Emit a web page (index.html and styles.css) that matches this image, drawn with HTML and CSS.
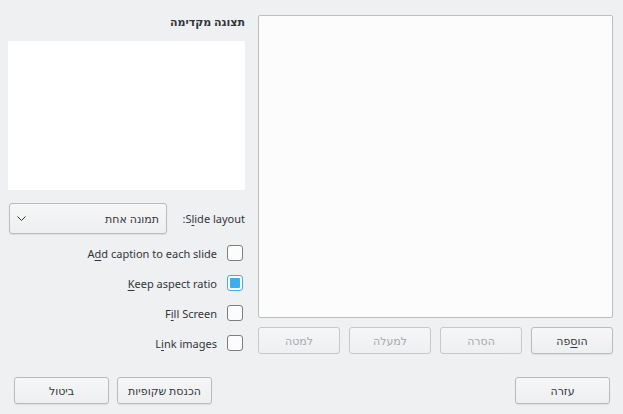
FILE: index.html
```html
<!DOCTYPE html>
<html dir="rtl" lang="he">
<head>
<meta charset="utf-8">
<link rel="stylesheet" href="styles.css">
</head>
<body>
<div class="dialog">
  <div class="main">
    <div class="list-col">
      <div class="list"></div>
      <div class="list-buttons">
        <button class="btn">הו<u>ס</u>פה</button>
        <button class="btn disabled">הסרה</button>
        <button class="btn disabled">למעלה</button>
        <button class="btn disabled">למטה</button>
      </div>
    </div>
    <div class="side-col">
      <div class="title">תצוגה מקדימה</div>
      <div class="preview"></div>
      <div class="layout-row">
        <span class="label"><span dir="ltr">S<u>l</u>ide layout</span>:</span>
        <div class="combo">
          <span class="combo-text">תמונה אחת</span>
          <svg class="combo-arrow" width="9" height="5" viewBox="0 0 9 5"><path d="M0.5 0.5 L4.5 4.5 L8.5 0.5" fill="none" stroke="#31363b" stroke-width="1"/></svg>
        </div>
      </div>
      <div class="check-row first">
        <span class="box"></span>
        <span class="label" dir="ltr">A<u>d</u>d caption to each slide</span>
      </div>
      <div class="check-row">
        <span class="box checked"></span>
        <span class="label" dir="ltr"><u>K</u>eep aspect ratio</span>
      </div>
      <div class="check-row">
        <span class="box"></span>
        <span class="label" dir="ltr">F<u>i</u>ll Screen</span>
      </div>
      <div class="check-row">
        <span class="box"></span>
        <span class="label" dir="ltr">L<u>i</u>nk images</span>
      </div>
    </div>
  </div>
  <div class="footer">
    <button class="btn wide">עזרה</button>
    <div class="spacer"></div>
    <button class="btn wide">הכנסת שקופיות</button>
    <button class="btn wide">ביטול</button>
  </div>
</div>
</body>
</html>
```
FILE: styles.css
```css
html, body {
  margin: 0;
  padding: 0;
  background: #eff0f1;
  font-family: "Noto Sans", "DejaVu Sans", sans-serif;
  font-size: 11px;
  color: #31363b;
}
.dialog {
  width: 623px;
  height: 414px;
  box-sizing: border-box;
  padding: 15px 10px 0 8px;
}
.main {
  display: grid;
  grid-template-columns: 355px 237px;
  column-gap: 13px;
}
.list-col {
  display: flex;
  flex-direction: column;
}
.list {
  height: 301px;
  background: #fcfcfc;
  border: 1px solid #bcbebf;
  border-radius: 2px;
}
.list-buttons {
  margin-top: 9px;
  display: flex;
  gap: 9px;
}
.btn {
  font-family: "Noto Sans", "DejaVu Sans", sans-serif;
  font-size: 11px;
  color: #31363b;
  height: 27px;
  width: 82px;
  padding: 0;
  border: 1px solid #b9bbbc;
  border-radius: 3px;
  background: linear-gradient(#f6f6f7, #eeeff0);
  box-shadow: 0 1px 1px rgba(0,0,0,0.08);
}
.btn.disabled {
  color: #a6a8aa;
  border-color: #c6c8c9;
  box-shadow: none;
}
.btn.wide {
  width: 95px;
}
.side-col {
  display: flex;
  flex-direction: column;
}
.title {
  height: 26px;
  line-height: 13px;
  font-weight: bold;
  font-size: 11px;
}
.preview {
  height: 149px;
  background: #ffffff;
}
.layout-row {
  margin-top: 13px;
  height: 31px;
  display: flex;
  align-items: center;
  justify-content: space-between;
  padding-left: 1px;
}
.combo {
  width: 158px;
  height: 31px;
  box-sizing: border-box;
  border: 1px solid #b9bbbc;
  border-radius: 3px;
  background: linear-gradient(#f6f6f7, #eeeff0);
  box-shadow: 0 1px 1px rgba(0,0,0,0.08);
  display: flex;
  align-items: center;
  justify-content: space-between;
  padding: 0 7px 0 7px;
}
.combo-arrow {
  display: block;
}
.check-row {
  height: 30px;
  display: flex;
  align-items: center;
  gap: 10px;
  padding-right: 2px;
}
.check-row.first {
  margin-top: 4px;
}
.box {
  width: 16px;
  height: 16px;
  box-sizing: border-box;
  border: 1px solid #7c7f82;
  border-radius: 3px;
  background: #fcfcfc;
  position: relative;
}
.box.checked {
  border-color: #3daee9;
}
.box.checked::after {
  content: "";
  position: absolute;
  left: 2px;
  top: 2px;
  right: 2px;
  bottom: 2px;
  background: #3daee9;
  border-radius: 1px;
}
.footer {
  margin-top: 19px;
  display: flex;
  gap: 8px;
  padding: 0 3px 0 6px;
}
.spacer {
  flex: 1;
}
u {
  text-decoration-thickness: 1px;
  text-underline-offset: 2px;
}
```
